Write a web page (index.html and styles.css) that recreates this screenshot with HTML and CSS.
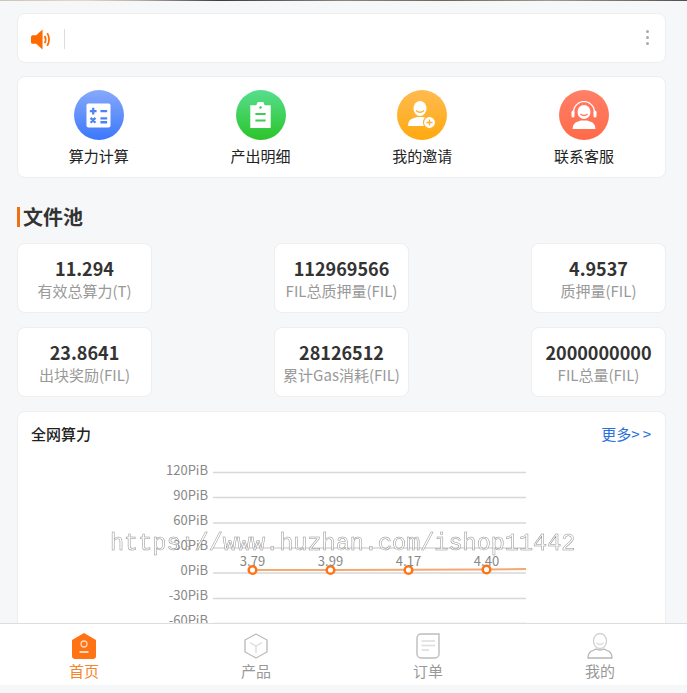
FILE: index.html
```html
<!DOCTYPE html>
<html lang="zh-CN">
<head>
    <meta charset="UTF-8">
    <meta name="viewport" content="width=device-width, initial-scale=1.0">
    <title>文件池</title>
    <link rel="stylesheet" href="styles.css">
</head>
<body>
    <div class="top-strip"></div>
    <div class="page">
        <div class="card notice">
            <svg class="notice-icon" viewBox="0 0 20 20" width="21" height="21">
                <path d="M0 7.500Q0 6 1.500 6H5L11 .5V19.500L5 14H1.500Q0 14 0 12.500Z" fill="#ff6a00"/>
                <path d="M13 6.500Q15 10 13 13.500" fill="none" stroke="#ff6a00" stroke-width="1.600"/>
                <path d="M15.500 4Q19 10 15.500 16" fill="none" stroke="#ff6a00" stroke-width="1.600"/>
            </svg>
            <span class="notice-line"></span>
            <span class="notice-more"><i></i><i></i><i></i></span>
        </div>

        <div class="card menu">
            <div class="menu-item">
                <span class="menu-icon blue">
                    <svg viewBox="0 0 26 26" width="25" height="25">
                        <rect width="25" height="25" x=".5" y=".5" rx="2" fill="#fff"/>
                        <path d="M4 8.500h7M7.500 5v7M15 8.500h7M4.800 15.500l5 5M9.800 15.500l-5 5M15 16h7M15 20h7" stroke="#4d84f5" stroke-width="2.400" fill="none"/>
                    </svg>
                </span>
                <span class="menu-label">算力计算</span>
            </div>
            <div class="menu-item">
                <span class="menu-icon green">
                    <svg viewBox="0 0 22 28" width="21" height="26">
                        <path d="M0 3.500h6.500L8 0h6l1.500 3.500H22V28H0Z" fill="#fff"/>
                        <circle cx="11" cy="6" r="1.300" fill="#3ecb5a"/>
                        <path d="M5.500 13h11M5.500 20h11" stroke="#3ecb5a" stroke-width="2.200"/>
                    </svg>
                </span>
                <span class="menu-label">产出明细</span>
            </div>
            <div class="menu-item">
                <span class="menu-icon orange">
                    <svg viewBox="0 0 28 28" width="28" height="28">
                        <ellipse cx="12" cy="7.500" rx="6.500" ry="7.500" fill="#fff"/>
                        <path d="M8 9.500q4 3.500 8 0" stroke="#ffb030" stroke-width="1.300" fill="none"/>
                        <path d="M0 25q0-7 6-8l3-1h6l3 1q3 1 4 3v5Z" fill="#fff"/>
                        <circle cx="21.500" cy="21.500" r="6" fill="#fff" stroke="#ffb030" stroke-width="1.200"/>
                        <path d="M18.500 21.500h6M21.500 18.500v6" stroke="#ffb030" stroke-width="1.300"/>
                    </svg>
                </span>
                <span class="menu-label">我的邀请</span>
            </div>
            <div class="menu-item">
                <span class="menu-icon red">
                    <svg viewBox="0 0 30 28" width="30" height="28">
                        <path d="M4.500 13V11a10.500 10.500 0 0 1 21 0v2" fill="none" stroke="#fff" stroke-width="1.200"/>
                        <rect x="2.500" y="9.500" width="3" height="7" rx="1.500" fill="#fff"/>
                        <rect x="24.500" y="9.500" width="3" height="7" rx="1.500" fill="#fff"/>
                        <ellipse cx="15" cy="11" rx="6.500" ry="7" fill="#fff"/>
                        <path d="M11.500 13q3.500 3 7 0" stroke="#ff7a5c" stroke-width="1.300" fill="none"/>
                        <path d="M3.500 28q0-6 5.500-7.500l3-1h6l3 1q5.500 1.500 5.500 7.500Z" fill="#fff"/>
                    </svg>
                </span>
                <span class="menu-label">联系客服</span>
            </div>
        </div>

        <h2 class="section-title">文件池</h2>

        <div class="stats">
            <div class="card stat"><strong>11.294</strong><span>有效总算力(T)</span></div>
            <div class="card stat"><strong>112969566</strong><span>FIL总质押量(FIL)</span></div>
            <div class="card stat"><strong>4.9537</strong><span>质押量(FIL)</span></div>
            <div class="card stat"><strong>23.8641</strong><span>出块奖励(FIL)</span></div>
            <div class="card stat"><strong>28126512</strong><span>累计Gas消耗(FIL)</span></div>
            <div class="card stat"><strong>2000000000</strong><span>FIL总量(FIL)</span></div>
        </div>

        <div class="card chart-card">
            <div class="chart-head">
                <span class="chart-title">全网算力</span>
                <span class="chart-more">更多<em>&gt;&gt;</em></span>
            </div>
            <svg class="chart" viewBox="0 0 647 220" width="647" height="220">
                <g class="grid">
                    <path d="M195 33.500H508M195 58.500H508M195 84H508M195 109H508M195 134H508M195 159.500H508M195 184.500H508"/>
                </g>
                <g class="axis">
                    <text x="190" y="36">120PiB</text>
                    <text x="190" y="61">90PiB</text>
                    <text x="190" y="86">60PiB</text>
                    <text x="190" y="111">30PiB</text>
                    <text x="190" y="136">0PiB</text>
                    <text x="190" y="161">-30PiB</text>
                    <text x="190" y="186">-60PiB</text>
                </g>
                <path class="series" d="M234 131H313L391 130.800L468 130.500L508 130"/>
                <g class="dots">
                    <circle cx="234.500" cy="131" r="3.800"/>
                    <circle cx="312.500" cy="131" r="3.800"/>
                    <circle cx="390.500" cy="131" r="3.800"/>
                    <circle cx="468.500" cy="130.500" r="3.800"/>
                </g>
                <g class="values">
                    <text x="234.500" y="127">3.79</text>
                    <text x="312.500" y="127">3.99</text>
                    <text x="390.500" y="127">4.17</text>
                    <text x="468.500" y="127">4.40</text>
                </g>
            </svg>
        </div>
    </div>

    <div class="watermark">https://www.huzhan.com/ishop11442</div>

    <nav class="tabbar">
        <div class="tab active">
            <svg viewBox="0 0 24 26" width="24" height="26">
                <path d="M0 7 12 0 24 7V23a3 3 0 0 1-3 3H3a3 3 0 0 1-3-3Z" fill="#ff7314"/>
                <circle cx="12" cy="11" r="3" fill="none" stroke="#ffd7b8" stroke-width="1.300"/>
                <path d="M7.500 19h9" stroke="#ffe3cc" stroke-width="1.800"/>
            </svg>
            <span>首页</span>
        </div>
        <div class="tab">
            <svg viewBox="0 0 24 26" width="24" height="26">
                <path d="M12 1 23 7V19L12 25 1 19V7Z" fill="none" stroke="#bdbdbd" stroke-width="1.400" stroke-linejoin="round"/>
                <path d="M6 9.500 12 13 18 9.500M12 13v7" fill="none" stroke="#dcdcdc" stroke-width="1.400"/>
            </svg>
            <span>产品</span>
        </div>
        <div class="tab">
            <svg viewBox="0 0 24 26" width="24" height="26">
                <path d="M5 1H23V21a4 4 0 0 1-4 4H5a4 4 0 0 1-4-4V5a4 4 0 0 1 4-4Z" fill="none" stroke="#bdbdbd" stroke-width="1.400"/>
                <path d="M5.500 8H19M5.500 12.500H19M5.500 17H13" stroke="#dcdcdc" stroke-width="1.400"/>
            </svg>
            <span>订单</span>
        </div>
        <div class="tab">
            <svg viewBox="0 0 26 26" width="26" height="26">
                <ellipse cx="13" cy="8" rx="6.500" ry="7.500" fill="none" stroke="#d0d0d0" stroke-width="1.300"/>
                <path d="M9.500 10q3.500 3 7 0" fill="none" stroke="#dcdcdc" stroke-width="1.300"/>
                <path d="M1 25q0-6 5-7.500l3-1.500q4 2 8 0l3 1.500q5 1.500 5 7.500Z" fill="none" stroke="#b5b5b5" stroke-width="1.300" stroke-linejoin="round"/>
            </svg>
            <span>我的</span>
        </div>
    </nav>
</body>
</html>
```

FILE: styles.css
```css
:root {
    --page-bg: #f6f7f9;
    --border: #eeeeee;
    --accent: #ff6a00;
    --text-dark: #333333;
    --text-grey: #999999;
}

html, body {
    height: 100%;
}

body {
    margin: 0;
    overflow: hidden;
    position: relative;
    background: var(--page-bg);
    font-family: "Noto Sans CJK SC", "Noto Sans", sans-serif;
    color: var(--text-dark);
}

.top-strip {
    height: 1px;
    background: linear-gradient(90deg, #c9c4bc 0, #e8d8c0 12%, #b8b0a8 20%, #3c3c40 32%, #8a8580 50%, #70655a 65%, #a09a90 80%, #55504c 100%);
}

.page {
    padding: 12px 21px 0 17px;
}

.card {
    background: #fff;
    border: 1px solid var(--border);
    border-radius: 8px;
    box-sizing: border-box;
}

.notice {
    display: flex;
    align-items: center;
    height: 50px;
    padding: 2px 13px 0;
}

.notice-icon {
    flex: none;
}

.notice-line {
    width: 1px;
    height: 20px;
    margin-left: 12px;
    background: #dddddd;
}

.notice-more {
    display: flex;
    flex-direction: column;
    gap: 3px;
    margin: -4px 3px 0 auto;
}

.notice-more i {
    width: 3px;
    height: 3px;
    background: #aaa;
    border-radius: 50%;
}

.menu {
    display: grid;
    grid-template-columns: repeat(4, 1fr);
    height: 102px;
    margin-top: 13px;
    padding-top: 13px;
}

.menu-item {
    display: flex;
    flex-direction: column;
    align-items: center;
}

.menu-icon {
    display: flex;
    align-items: center;
    justify-content: center;
    width: 50px;
    height: 50px;
    border-radius: 50%;
}

.blue { background: linear-gradient(180deg, #86a9fb, #3b78fb); }
.green { background: linear-gradient(180deg, #56de8e, #2cc42a); }
.orange { background: linear-gradient(180deg, #ffbb50, #ffa90f); }
.red { background: linear-gradient(180deg, #ff8068, #ff6a48); }

.menu-label {
    margin-top: 5px;
    font-size: 15px;
    line-height: 22px;
    color: #222;
}

.section-title {
    height: 20px;
    margin: 29px 0 0;
    padding-left: 3px;
    border-left: 3px solid #f07010;
    font-size: 20px;
    line-height: 20px;
    font-weight: 700;
    color: var(--text-dark);
}

.stats {
    display: grid;
    grid-template-columns: repeat(3, 135px);
    justify-content: space-between;
    row-gap: 14px;
    margin-top: 16px;
}

.stat {
    display: flex;
    flex-direction: column;
    align-items: center;
    height: 70px;
    padding-top: 12px;
}

.stat strong {
    font-size: 18px;
    line-height: 24px;
    font-weight: 700;
}

.stat span {
    font-size: 15px;
    line-height: 22px;
    color: var(--text-grey);
}

.chart-card {
    height: 270px;
    margin-top: 14px;
}

.chart-head {
    display: flex;
    justify-content: space-between;
    align-items: center;
    padding: 11px 14px 0 13px;
    font-size: 15px;
    line-height: 22px;
}

.chart-title {
    font-weight: 500;
    color: #222;
}

.chart-more {
    color: #2a6fdb;
    white-space: nowrap;
    margin-right: -3px;
}

.chart-more em {
    font-style: normal;
    letter-spacing: 3px;
}

.chart {
    display: block;
    margin-top: -6px;
}

.grid path {
    fill: none;
    stroke: #d8d8d8;
    stroke-width: 1.500;
}

.axis text {
    font-size: 13px;
    fill: #888;
    text-anchor: end;
}

.values text {
    font-size: 13px;
    fill: #888;
    text-anchor: middle;
}

.series {
    fill: none;
    stroke: #f6a873;
    stroke-width: 2;
}

.dots circle {
    fill: #fff;
    stroke: #ff7314;
    stroke-width: 2.500;
}

.watermark {
    position: absolute;
    left: 110px;
    top: 529px;
    font-family: "Liberation Mono", monospace;
    font-size: 23.500px;
    line-height: 30px;
    white-space: nowrap;
    color: rgba(255, 255, 255, 0.6);
    -webkit-text-stroke: 0.500px #909090;
    will-change: transform;
}

.tabbar {
    position: absolute;
    left: 0;
    right: 0;
    bottom: 8px;
    height: 62px;
    box-sizing: border-box;
    display: grid;
    grid-template-columns: repeat(4, 172px);
    margin-left: -2px;
    padding-top: 9px;
    background: #fff;
    border-top: 1px solid #dddddd;
}

.tab {
    display: flex;
    flex-direction: column;
    align-items: center;
    font-size: 15px;
    line-height: 22px;
    color: var(--text-grey);
}

.tab span {
    margin-top: 1px;
}

.tab.active {
    color: #f5842a;
}
```
